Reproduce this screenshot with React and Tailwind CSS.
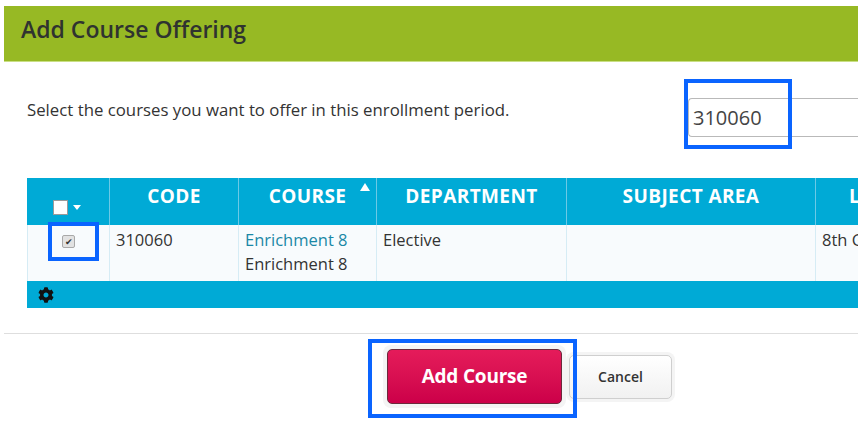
import React from "react";
import { FaCog } from "react-icons/fa";

const font = { fontFamily: "'Open Sans', 'Noto Sans', sans-serif" };

const App = () => {
  const columns = [
    { label: "CODE", w: "w-[129px]" },
    { label: "COURSE", w: "w-[138px]", sort: true },
    { label: "DEPARTMENT", w: "w-[190px]" },
    { label: "SUBJECT AREA", w: "w-[249px]" },
    { label: "LEVEL", w: "w-[124px]" },
  ];

  return (
    <div className="w-[865px] h-[426px] bg-white overflow-hidden" style={font}>
      <div className="relative w-[854px] h-[426px] ml-[4px] pt-[6px] overflow-hidden">
        {/* Header */}
        <div className="h-[56px] bg-[#97b924] border-b border-[#c9df85] pl-[17px] pt-[7px]">
          <h1 className="text-[23px] leading-[32px] font-semibold text-[#2f3330]">
            Add Course Offering
          </h1>
        </div>

        {/* Intro + search */}
        <div className="flex items-start pt-[36px] h-[116px]">
          <p className="pl-[23px] text-[16.8px] leading-[24px] text-[#333] w-[684px]">
            Select the courses you want to offer in this enrollment period.
          </p>
          <div className="flex-1 h-[39px] border border-r-0 border-[#b9b9b9] rounded-l-[4px] flex items-center pl-[4px] text-[20px] text-[#444]">
            310060
          </div>
        </div>

        {/* Table */}
        <div className="ml-[23px] w-[831px] overflow-hidden">
          <div className="flex h-[47px] bg-[#00aad6] text-white">
            <div className="w-[82px] shrink-0 flex items-end justify-center pb-[10px]">
              <div className="flex items-center gap-[5px] mr-[2px]">
                <div className="w-[15px] h-[15px] bg-white border border-[#9a9a9a]" />
                <div className="w-0 h-0 border-l-[4px] border-r-[4px] border-t-[5px] border-l-transparent border-r-transparent border-t-white" />
              </div>
            </div>
            {columns.map((c) => (
              <div
                key={c.label}
                className={`${c.w} shrink-0 relative border-l border-[#6cc9e6] pt-[4px] text-center text-[19px] leading-[28px] font-bold tracking-[0.4px] whitespace-nowrap`}
              >
                {c.label}
                {c.sort && (
                  <div className="absolute right-[6px] top-[5px] w-0 h-0 border-l-[5px] border-r-[5px] border-b-[8px] border-l-transparent border-r-transparent border-b-white" />
                )}
              </div>
            ))}
          </div>

          <div className="flex h-[56px] bg-[#f8fbfd] border-l border-[#d6ecf5] text-[16.5px] leading-[24px] text-[#333]">
            <div className="w-[81px] shrink-0 flex justify-center pt-[10px]">
              <div className="w-[13px] h-[13px] rounded-[2px] bg-[#e2e2e2] border border-[#a9a9a9] flex items-center justify-center text-[9px] leading-none text-[#333]">
                ✔
              </div>
            </div>
            <div className="w-[129px] shrink-0 border-l border-[#d6ecf5] pl-[6px] pt-[3px]">310060</div>
            <div className="w-[138px] shrink-0 border-l border-[#d6ecf5] pl-[6px] pt-[3px]">
              <div className="text-[#1b88a6]">Enrichment 8</div>
              <div>Enrichment 8</div>
            </div>
            <div className="w-[190px] shrink-0 border-l border-[#d6ecf5] pl-[6px] pt-[3px]">Elective</div>
            <div className="w-[249px] shrink-0 border-l border-[#d6ecf5]" />
            <div className="w-[124px] shrink-0 border-l border-[#d6ecf5] pl-[6px] pt-[3px] whitespace-nowrap">8th Grade</div>
          </div>

          <div className="h-[27px] bg-[#00aad6] flex items-center pl-[11px] text-[#111]">
            <FaCog size={16} />
          </div>
        </div>

        {/* Divider */}
        <div className="mt-[25px] border-t border-[#dedede]" />

        {/* Buttons */}
        <div className="flex items-center pt-[11px] pl-[379px]">
          <div className="p-[4px] rounded-[8px] bg-[#f4f4f4]">
            <button className="w-[175px] h-[55px] rounded-[5px] border border-[#6b2a3c] bg-gradient-to-b from-[#e51b5a] to-[#cc0049] text-white text-[19px] font-bold tracking-[-0.2px]">
              Add Course
            </button>
          </div>
          <div className="p-[3px] rounded-[8px] bg-[#f4f4f4]">
            <button className="w-[103px] h-[44px] rounded-[5px] border border-[#cfcfcf] bg-gradient-to-b from-white to-[#f1f1f1] text-[#333] text-[14px] font-semibold">
              Cancel
            </button>
          </div>
        </div>

        {/* Annotation highlights */}
        <div className="absolute left-[680px] top-[79px] w-[108px] h-[70px] border-[4px] border-[#0a64ff]" />
        <div className="absolute left-[44px] top-[222px] w-[51px] h-[39px] border-[4px] border-[#0a64ff]" />
        <div className="absolute left-[364px] top-[339px] w-[209px] h-[79px] border-[4px] border-[#0a64ff]" />
      </div>
    </div>
  );
};

export default App;
